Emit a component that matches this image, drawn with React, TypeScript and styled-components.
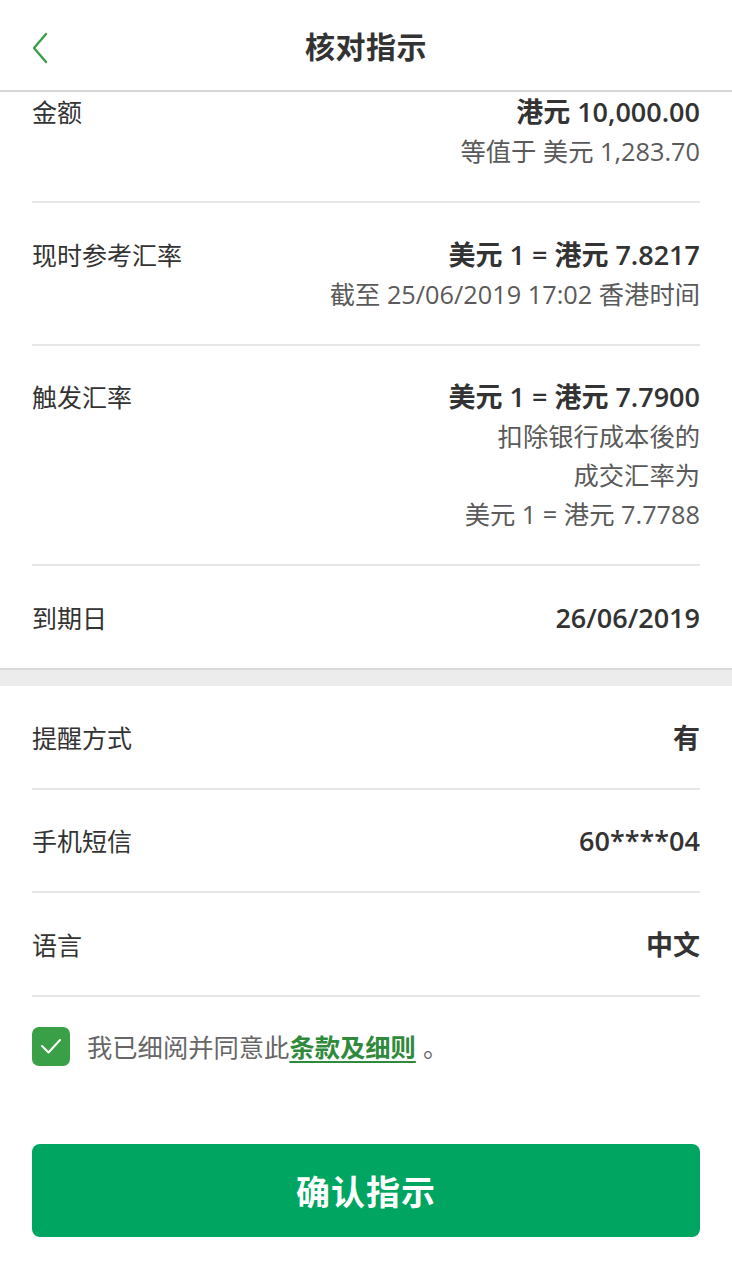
import React from "react";
import styled, { createGlobalStyle } from "styled-components";

const Global = createGlobalStyle`
  html, body { margin: 0; padding: 0; background: #fff; }
  body { font-family: "Open Sans", "Noto Sans CJK SC", sans-serif; color: #333; }
  * { box-sizing: border-box; }
`;

const Page = styled.div`
  width: 732px;
  min-height: 1269px;
  background: #fff;
`;

const Header = styled.header`
  height: 92px;
  display: flex;
  align-items: center;
  justify-content: center;
  position: relative;
  border-bottom: 2px solid #d6d6d6;
`;

const Title = styled.h1`
  margin: 0;
  font-size: 30px;
  font-weight: 700;
  color: #333;
  letter-spacing: 0.5px;
`;

const Back = styled.button`
  position: absolute;
  left: 26px;
  top: 28px;
  width: 28px;
  height: 40px;
  border: 0;
  background: none;
  padding: 0;
  display: flex;
  align-items: center;
  justify-content: center;
`;

const Section = styled.section<{ $band?: boolean }>`
  padding: 0 32px;
  border-bottom: ${(p) => (p.$band ? "2px solid #dadada" : "none")};
`;

const Band = styled.div`
  height: 16px;
  background: #ececec;
`;

const Row = styled.div<{ $top?: number; $last?: boolean }>`
  display: flex;
  justify-content: space-between;
  align-items: flex-start;
  padding: ${(p) => (p.$top ?? 31.5)}px 0 30px;
  border-bottom: ${(p) => (p.$last ? "none" : "2px solid #e6e6e6")};
`;

const Label = styled.div`
  font-size: 25px;
  line-height: 40px;
  color: #333;
`;

const Values = styled.div`
  display: flex;
  flex-direction: column;
  align-items: flex-end;
  text-align: right;
`;

const Main = styled.div`
  font-size: 27px;
  line-height: 40px;
  font-weight: 600;
  color: #333;
`;

const Sub = styled.div`
  font-size: 25.3px;
  line-height: 39px;
  color: #5a5a5a;
`;

const Agree = styled.div`
  display: flex;
  align-items: center;
  gap: 17px;
  padding: 30px 32px 0;
`;

const Check = styled.span`
  width: 38px;
  height: 39px;
  border-radius: 7px;
  background: #3aa048;
  display: flex;
  align-items: center;
  justify-content: center;
  flex-shrink: 0;
`;

const AgreeText = styled.span`
  font-size: 25.3px;
  color: #666;
`;

const Link = styled.a`
  color: #2f8a3b;
  font-weight: 700;
  text-decoration: underline;
  text-underline-offset: 4px;
  text-decoration-thickness: 2px;
`;

const Period = styled.span`
  margin-left: 7px;
`;

const ButtonWrap = styled.div`
  padding: 78px 32px 0;
`;

const Confirm = styled.button`
  width: 100%;
  height: 93px;
  border: 0;
  border-radius: 8px;
  background: #00a561;
  color: #fff;
  font-family: "Open Sans", "Noto Sans CJK SC", sans-serif;
  font-size: 34px;
  font-weight: 700;
  letter-spacing: 1px;
`;

export default function App() {
  return (
    <Page>
      <Global />
      <Header>
        <Back aria-label="back">
          <svg width="18" height="32" viewBox="0 0 18 32">
            <polyline points="15,2 3,16 15,30" fill="none" stroke="#3aa048" strokeWidth="2.4" strokeLinecap="round" strokeLinejoin="round" />
          </svg>
        </Back>
        <Title>核对指示</Title>
      </Header>
      <Section $band>
        <Row $top={0}>
          <Label>金额</Label>
          <Values>
            <Main>港元 10,000.00</Main>
            <Sub>等值于 美元 1,283.70</Sub>
          </Values>
        </Row>
        <Row>
          <Label>现时参考汇率</Label>
          <Values>
            <Main>美元 1 = 港元 7.8217</Main>
            <Sub>截至 25/06/2019 17:02 香港时间</Sub>
          </Values>
        </Row>
        <Row>
          <Label>触发汇率</Label>
          <Values>
            <Main>美元 1 = 港元 7.7900</Main>
            <Sub>扣除银行成本後的</Sub>
            <Sub>成交汇率为</Sub>
            <Sub>美元 1 = 港元 7.7788</Sub>
          </Values>
        </Row>
        <Row $last>
          <Label>到期日</Label>
          <Values>
            <Main>26/06/2019</Main>
          </Values>
        </Row>
      </Section>
      <Band />
      <Section>
        <Row $top={32}>
          <Label>提醒方式</Label>
          <Values>
            <Main>有</Main>
          </Values>
        </Row>
        <Row>
          <Label>手机短信</Label>
          <Values>
            <Main>60****04</Main>
          </Values>
        </Row>
        <Row>
          <Label>语言</Label>
          <Values>
            <Main>中文</Main>
          </Values>
        </Row>
      </Section>
      <Agree>
        <Check>
          <svg width="24" height="20" viewBox="0 0 24 20">
            <polyline points="3,10 9.5,16.5 21,4" fill="none" stroke="#fff" strokeWidth="2" strokeLinecap="round" strokeLinejoin="round" />
          </svg>
        </Check>
        <AgreeText>
          我已细阅并同意此<Link>条款及细则</Link><Period>。</Period>
        </AgreeText>
      </Agree>
      <ButtonWrap>
        <Confirm>确认指示</Confirm>
      </ButtonWrap>
    </Page>
  );
}
